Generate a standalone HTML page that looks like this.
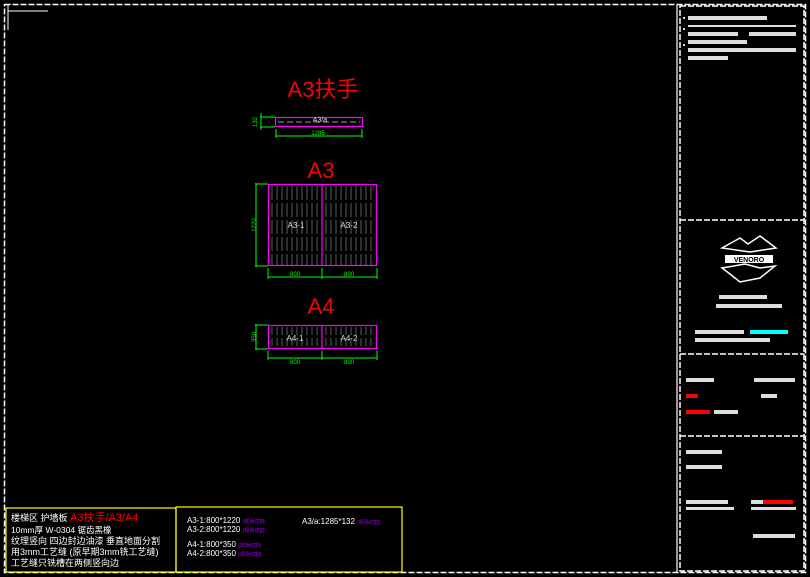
<!DOCTYPE html>
<html><head><meta charset="utf-8"><style>
html,body{margin:0;padding:0;background:#000;width:810px;height:577px;overflow:hidden}
svg{display:block}
text{font-family:"Liberation Sans","Noto Sans CJK SC",sans-serif}
</style></head><body>
<svg width="810" height="577" viewBox="0 0 810 577" xmlns="http://www.w3.org/2000/svg">
<rect width="810" height="577" fill="#000"/>
<g fill="none" stroke="#fff" stroke-width="1.5" stroke-dasharray="6,2">
<rect x="4.5" y="4.5" width="801" height="568"/>
<rect x="680" y="6" width="124" height="565"/>
<line x1="680" y1="220" x2="804" y2="220"/>
<line x1="680" y1="354" x2="804" y2="354"/>
<line x1="680" y1="436" x2="804" y2="436"/>
</g>
<line x1="677" y1="5" x2="677" y2="572" stroke="#fff" stroke-width="1.2"/>
<line x1="8" y1="11" x2="48" y2="11" stroke="#fff"/>
<line x1="8" y1="5" x2="8" y2="30" stroke="#fff"/>

<text x="323" y="97" fill="#f00" font-size="22" text-anchor="middle">A3扶手</text>
<rect x="275.5" y="117.5" width="87" height="9" fill="none" stroke="#f0f" stroke-width="1.2"/>
<line x1="278" y1="122" x2="360" y2="122" stroke="#999" stroke-dasharray="6,3"/>
<text x="320" y="122" fill="#ddd" font-size="7" text-anchor="middle">A3/a</text>
<g stroke="#0f0" stroke-width="1" fill="none">
<line x1="260" y1="117" x2="275" y2="117"/><line x1="260" y1="127" x2="275" y2="127"/><line x1="261" y1="113" x2="261" y2="130"/>
<line x1="276" y1="136" x2="362" y2="136"/><line x1="276" y1="129" x2="276" y2="138"/><line x1="362" y1="129" x2="362" y2="138"/>
</g>
<text x="318" y="135" fill="#0f0" font-size="6" text-anchor="middle">1285</text>
<text x="256" y="123" fill="#0f0" font-size="6" text-anchor="middle" transform="rotate(-90 256 122)">132</text>

<text x="321" y="178" fill="#f00" font-size="22" text-anchor="middle">A3</text>
<g stroke="#bbb" stroke-width="0.5" stroke-dasharray="14,3">
<line x1="272" y1="186" x2="272" y2="265"/><line x1="277" y1="186" x2="277" y2="265"/><line x1="282" y1="186" x2="282" y2="265"/><line x1="287" y1="186" x2="287" y2="265"/><line x1="292" y1="186" x2="292" y2="265"/><line x1="297" y1="186" x2="297" y2="265"/><line x1="302" y1="186" x2="302" y2="265"/><line x1="307" y1="186" x2="307" y2="265"/><line x1="312" y1="186" x2="312" y2="265"/><line x1="317" y1="186" x2="317" y2="265"/>
<line x1="326" y1="186" x2="326" y2="265"/><line x1="331" y1="186" x2="331" y2="265"/><line x1="336" y1="186" x2="336" y2="265"/><line x1="341" y1="186" x2="341" y2="265"/><line x1="346" y1="186" x2="346" y2="265"/><line x1="351" y1="186" x2="351" y2="265"/><line x1="356" y1="186" x2="356" y2="265"/><line x1="361" y1="186" x2="361" y2="265"/><line x1="366" y1="186" x2="366" y2="265"/><line x1="371" y1="186" x2="371" y2="265"/>
</g>
<rect x="268.5" y="184.5" width="108" height="81" fill="none" stroke="#f0f" stroke-width="1.2"/>
<line x1="322" y1="184" x2="322" y2="266" stroke="#f0f" stroke-width="1.2"/>
<text x="296" y="228" fill="#ddd" font-size="8" text-anchor="middle">A3-1</text>
<text x="349" y="228" fill="#ddd" font-size="8" text-anchor="middle">A3-2</text>
<g stroke="#0f0" stroke-width="1" fill="none">
<line x1="255" y1="184" x2="268" y2="184"/><line x1="255" y1="266" x2="268" y2="266"/><line x1="256" y1="183" x2="256" y2="267"/>
<line x1="268" y1="277" x2="377" y2="277"/><line x1="268" y1="268" x2="268" y2="279"/><line x1="322" y1="268" x2="322" y2="279"/><line x1="377" y1="268" x2="377" y2="279"/>
</g>
<text x="295" y="276" fill="#0f0" font-size="6" text-anchor="middle">800</text>
<text x="349" y="276" fill="#0f0" font-size="6" text-anchor="middle">800</text>
<text x="254" y="227" fill="#0f0" font-size="6" text-anchor="middle" transform="rotate(-90 254 225)">1220</text>

<text x="321" y="314" fill="#f00" font-size="22" text-anchor="middle">A4</text>
<g stroke="#bbb" stroke-width="0.5" stroke-dasharray="8,3">
<line x1="272" y1="327" x2="272" y2="348"/><line x1="277" y1="327" x2="277" y2="348"/><line x1="282" y1="327" x2="282" y2="348"/><line x1="287" y1="327" x2="287" y2="348"/><line x1="292" y1="327" x2="292" y2="348"/><line x1="297" y1="327" x2="297" y2="348"/><line x1="302" y1="327" x2="302" y2="348"/><line x1="307" y1="327" x2="307" y2="348"/><line x1="312" y1="327" x2="312" y2="348"/><line x1="317" y1="327" x2="317" y2="348"/>
<line x1="326" y1="327" x2="326" y2="348"/><line x1="331" y1="327" x2="331" y2="348"/><line x1="336" y1="327" x2="336" y2="348"/><line x1="341" y1="327" x2="341" y2="348"/><line x1="346" y1="327" x2="346" y2="348"/><line x1="351" y1="327" x2="351" y2="348"/><line x1="356" y1="327" x2="356" y2="348"/><line x1="361" y1="327" x2="361" y2="348"/><line x1="366" y1="327" x2="366" y2="348"/><line x1="371" y1="327" x2="371" y2="348"/>
</g>
<rect x="268.5" y="325.5" width="108" height="23" fill="none" stroke="#f0f" stroke-width="1.2"/>
<line x1="322" y1="325" x2="322" y2="349" stroke="#f0f" stroke-width="1.2"/>
<text x="295" y="341" fill="#ddd" font-size="8" text-anchor="middle">A4-1</text>
<text x="349" y="341" fill="#ddd" font-size="8" text-anchor="middle">A4-2</text>
<g stroke="#0f0" stroke-width="1" fill="none">
<line x1="255" y1="325" x2="268" y2="325"/><line x1="255" y1="349" x2="268" y2="349"/><line x1="256" y1="324" x2="256" y2="350"/>
<line x1="268" y1="358" x2="377" y2="358"/><line x1="268" y1="351" x2="268" y2="360"/><line x1="322" y1="351" x2="322" y2="360"/><line x1="377" y1="351" x2="377" y2="360"/>
</g>
<text x="295" y="364" fill="#0f0" font-size="6" text-anchor="middle">800</text>
<text x="349" y="364" fill="#0f0" font-size="6" text-anchor="middle">800</text>
<text x="254" y="339" fill="#0f0" font-size="6" text-anchor="middle" transform="rotate(-90 254 337)">350</text>

<rect x="6" y="508" width="170" height="64" fill="none" stroke="#ff0" stroke-width="1.2"/>
<rect x="176" y="507" width="226" height="65" fill="none" stroke="#ff0" stroke-width="1.2"/>
<g fill="#fff" font-size="9">
<text x="11" y="521">楼梯区 护墙板 <tspan fill="#f00" font-size="11">A3扶手/A3/A4</tspan></text>
<text x="11" y="533" font-size="8.5">10mm厚  W-0304 锯齿黑橡</text>
<text x="11" y="544">纹理竖向 四边封边油漆 垂直地面分割</text>
<text x="11" y="555">用3mm工艺缝  (原早期3mm铣工艺缝)</text>
<text x="11" y="566">工艺缝只铣槽在两侧竖向边</text>
</g>
<g fill="#fff" font-size="8">
<text x="187" y="523">A3-1:800*1220 <tspan fill="#a0f" font-size="5">(现场切割)</tspan></text>
<text x="187" y="532">A3-2:800*1220 <tspan fill="#a0f" font-size="5">(现场切割)</tspan></text>
<text x="187" y="547">A4-1:800*350  <tspan fill="#a0f" font-size="5">(现场切割)</tspan></text>
<text x="187" y="556">A4-2:800*350  <tspan fill="#a0f" font-size="5">(现场切割)</tspan></text>
<text x="302" y="524">A3/a:1285*132 <tspan fill="#a0f" font-size="5">(现场切割)</tspan></text>
</g>

<g fill="#ddd">
<rect x="683" y="17" width="2" height="2"/><rect x="683" y="28" width="2" height="2"/><rect x="683" y="44" width="2" height="2"/>
<rect x="688" y="16" width="79" height="4"/><rect x="688" y="25" width="108" height="2"/>
<rect x="688" y="32" width="50" height="4"/><rect x="749" y="32" width="47" height="4"/>
<rect x="688" y="40" width="59" height="4"/><rect x="688" y="48" width="108" height="4"/>
<rect x="688" y="56" width="40" height="4"/>
</g>
<g fill="none" stroke="#fff" stroke-width="1.5">
<path d="M722 248 L740 238 L748 244 L760 236 L776 248 L750 252 Z"/>
<path d="M722 268 L745 264 L760 268 L775 266 L760 278 L740 282 L730 274 Z"/>
</g>
<rect x="725" y="255" width="48" height="8" fill="#fff"/>
<text x="749" y="262" fill="#000" font-size="7" text-anchor="middle" font-weight="bold">VENORO</text>
<rect x="719" y="295" width="48" height="4" fill="#ddd"/>
<rect x="716" y="304" width="66" height="4" fill="#ddd"/>
<rect x="695" y="330" width="49" height="4" fill="#ddd"/><rect x="750" y="330" width="38" height="4" fill="#0ff"/>
<rect x="695" y="338" width="75" height="4" fill="#ddd"/>
<rect x="686" y="378" width="28" height="4" fill="#ddd"/><rect x="754" y="378" width="41" height="4" fill="#ddd"/>
<rect x="686" y="394" width="12" height="4" fill="#f00"/><rect x="761" y="394" width="16" height="4" fill="#ddd"/>
<rect x="686" y="410" width="24" height="4" fill="#f00"/><rect x="714" y="410" width="24" height="4" fill="#ddd"/>
<rect x="686" y="450" width="36" height="4" fill="#ddd"/>
<rect x="686" y="465" width="36" height="4" fill="#ddd"/>
<rect x="686" y="500" width="42" height="4" fill="#ddd"/><rect x="686" y="507" width="48" height="3" fill="#ddd"/>
<rect x="751" y="500" width="12" height="4" fill="#ddd"/><rect x="763" y="500" width="30" height="4" fill="#f00"/><rect x="751" y="507" width="45" height="3" fill="#ddd"/>
<rect x="753" y="534" width="42" height="4" fill="#ddd"/>
</svg>
</body></html>
